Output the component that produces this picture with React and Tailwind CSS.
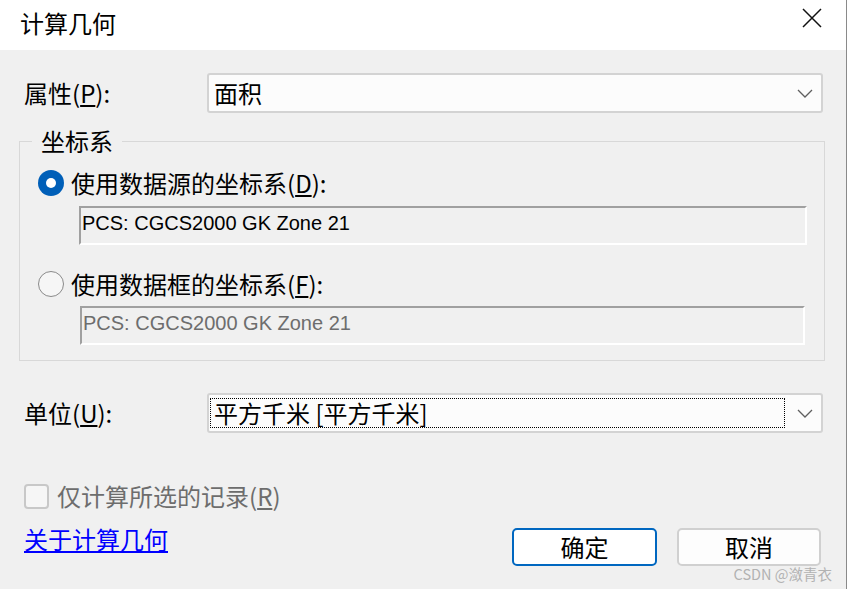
import React from 'react';

const cjk = "font-['Noto_Sans_CJK_SC','Microsoft_YaHei',sans-serif]";

const Chevron = () => (
    <svg width="16" height="9" viewBox="0 0 16 9" fill="none" className="shrink-0">
        <path d="M1 1l7 7 7-7" stroke="#5f5f5f" strokeWidth="1.3" />
    </svg>
);

const Combo = ({ children, focused }) => (
    <div className="w-[616px] h-[40px] bg-[#fcfcfc] border-2 border-[#d3d3d3] rounded-[3px] flex items-center pl-[1px] pr-[8px]">
        <div className={`flex-1 h-[30px] flex items-center pl-[3px] mr-[12px] ${focused ? 'border border-dotted border-black' : 'border border-transparent'}`}>
            <span className={`${cjk} text-[24px] leading-none text-black`}>{children}</span>
        </div>
        <Chevron />
    </div>
);

const Radio = ({ checked }) =>
    checked ? (
        <div className="w-[26px] h-[26px] rounded-full bg-[#005fb8] flex items-center justify-center shrink-0">
            <div className="w-[10px] h-[10px] rounded-full bg-white" />
        </div>
    ) : (
        <div className="w-[26px] h-[26px] rounded-full border-[1.5px] border-[#8a8a8a] bg-[#f6f6f6] shrink-0" />
    );

const CoordBox = ({ text, disabled, className }) => (
    <div className={`h-[39px] border-t-2 border-l-2 border-[#a0a0a0] border-r-2 border-b-2 border-r-white border-b-white bg-[#f0f0f0] pl-[1px] pt-[3px] ${className}`}>
        <span className={`font-['Liberation_Sans',Arial,sans-serif] text-[20px] leading-[24px] ${disabled ? 'text-[#6d6d6d]' : 'text-black'}`}>
            {text}
        </span>
    </div>
);

export default function App() {
    return (
        <div className={`w-[847px] h-[589px] bg-[#f0f0f0] flex flex-col relative overflow-hidden border-r border-[#8a8a8a] ${cjk}`}>
            {/* 标题栏 */}
            <div className="h-[50px] bg-white flex items-center justify-between pl-[20px] pr-[24px] shrink-0">
                <span className="text-[24px] leading-none text-black pb-[4px]">计算几何</span>
                <svg width="20" height="20" viewBox="0 0 20 20" className="mb-[14px]">
                    <path d="M1 1l18 18M19 1L1 19" stroke="#111" strokeWidth="1.5" />
                </svg>
            </div>

            {/* 属性 */}
            <div className="flex items-center mt-[23px] h-[40px] pl-[24px]">
                <span className="w-[183px] text-[24px] leading-none text-black">
                    属性(<u>P</u>):
                </span>
                <Combo>面积</Combo>
            </div>

            {/* 坐标系 */}
            <fieldset className="mt-[14px] ml-[19px] w-[806px] min-w-0 border border-[#d8d8d8] pl-[18px] pb-[15px]">
                <legend className="ml-[-6px] px-[9px] text-[24px] leading-[28px] text-black">坐标系</legend>

                <div className="flex items-center gap-[7px] h-[28px] mt-[14px]">
                    <Radio checked />
                    <span className="text-[24px] leading-none text-black">
                        使用数据源的坐标系(<u>D</u>):
                    </span>
                </div>
                <CoordBox text="PCS: CGCS2000 GK Zone 21" className="mt-[9px] ml-[41px] w-[728px]" />

                <div className="flex items-center gap-[7px] h-[28px] mt-[25px]">
                    <Radio />
                    <span className="text-[24px] leading-none text-black">
                        使用数据框的坐标系(<u>F</u>):
                    </span>
                </div>
                <CoordBox text="PCS: CGCS2000 GK Zone 21" disabled className="mt-[8px] ml-[42px] w-[725px]" />
            </fieldset>

            {/* 单位 */}
            <div className="flex items-center mt-[32px] h-[40px] pl-[24px]">
                <span className="w-[183px] text-[24px] leading-none text-black">
                    单位(<u>U</u>):
                </span>
                <Combo focused>平方千米 [平方千米]</Combo>
            </div>

            {/* 仅计算所选 */}
            <div className="flex items-center gap-[8px] h-[28px] mt-[49px] pl-[24px]">
                <div className="w-[25px] h-[25px] rounded-[4px] border-2 border-[#c8c8c8] bg-[#f6f6f6] shrink-0" />
                <span className="text-[24px] leading-none text-[#6d6d6d]">
                    仅计算所选的记录(<u>R</u>)
                </span>
            </div>

            {/* 底部 */}
            <div className="flex items-start justify-between mt-[15px] pl-[24px] pr-[25px]">
                <a href="#" className="text-[24px] leading-[28px] text-[#0000ff] underline">
                    关于计算几何
                </a>
                <div className="flex gap-[20px] mt-[3px]">
                    <button className="w-[145px] h-[38px] rounded-[5px] border-2 border-[#0067c0] bg-white text-[24px] leading-none text-black">
                        确定
                    </button>
                    <button className="w-[144px] h-[38px] rounded-[5px] border-2 border-[#d0d0d0] bg-[#fdfdfd] text-[24px] leading-none text-black">
                        取消
                    </button>
                </div>
            </div>

            <span className="absolute right-[14px] bottom-[8px] text-[14.5px] leading-none text-[#b2b2b2]">
                CSDN @潋青衣
            </span>
        </div>
    );
}
